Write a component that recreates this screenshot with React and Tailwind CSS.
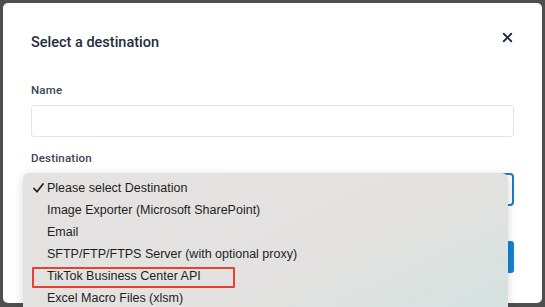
import { X } from 'lucide-react';

const OPTIONS = [
    'Please select Destination',
    'Image Exporter (Microsoft SharePoint)',
    'Email',
    'SFTP/FTP/FTPS Server (with optional proxy)',
    'TikTok Business Center API',
    'Excel Macro Files (xlsm)',
];

export default function App() {
    return (
        <div className="w-[545px] h-[307px] overflow-hidden bg-[#4f4f4f] pt-[3px] pl-[3px]">
            <div className="relative w-[539px] h-[300px] bg-white rounded-[5px] px-[28px] pt-[30px] font-['Roboto',sans-serif]">
                <div className="flex items-start justify-between">
                    <h2 className="text-[14.5px] leading-[20px] font-medium text-[#1f2d3d]">Select a destination</h2>
                    <X size={15} strokeWidth={3} className="text-[#1f2d3d] mt-[-3px] mr-[-1px]" />
                </div>

                <label className="block mt-[30px] text-[11.5px] leading-[14px] font-medium tracking-[0.2px] text-[#3b4452]">Name</label>
                <div className="mt-[8px] h-[32px] rounded-[3px] border border-[#e2e4e8]" />

                <label className="block mt-[14px] text-[11.5px] leading-[14px] font-medium tracking-[0.2px] text-[#3b4452]">Destination</label>
                <div className="mt-[8px] h-[33px] rounded-[4px] border-2 border-[#1a7bd0] flex items-center justify-end pr-[3px]">
                    <span className="text-[8px] text-[#333]">▼</span>
                </div>

                <div className="flex justify-end mt-[35px]">
                    <button className="h-[32px] w-[90px] rounded-[3px] bg-[#1581d4] text-white text-[13px] font-medium">Next</button>
                </div>

                {/* native select popup lying over the form */}
                <div className="absolute left-[19.5px] top-[170px] w-[485px] h-[140px] rounded-t-[6px] bg-[linear-gradient(155deg,#e4e3e1_0%,#e3e2e0_62%,#d3e1df_100%)] shadow-[0_2px_10px_rgba(0,0,0,0.16)] pt-[4px] font-['Liberation_Sans',sans-serif]">
                    {OPTIONS.map((opt, i) => (
                        <div key={opt} className="relative h-[22px] flex items-center text-[12.5px] text-[#1e1e1e]">
                            <span className="w-[24.5px] flex justify-end pr-[3px]">
                                {i === 0 && (
                                    <svg width="11" height="10" viewBox="0 0 11 10">
                                        <path d="M1 5.5 L4 8.8 L10 1" fill="none" stroke="#1e1e1e" strokeWidth="1.7" strokeLinecap="round" strokeLinejoin="round" />
                                    </svg>
                                )}
                            </span>
                            <span>{opt}</span>
                            {opt.startsWith('TikTok') && (
                                <div className="absolute left-[9.5px] top-[2px] w-[203px] h-[21px] border-2 border-[#e5432d] rounded-[1px]" />
                            )}
                        </div>
                    ))}
                </div>
            </div>
        </div>
    );
}
